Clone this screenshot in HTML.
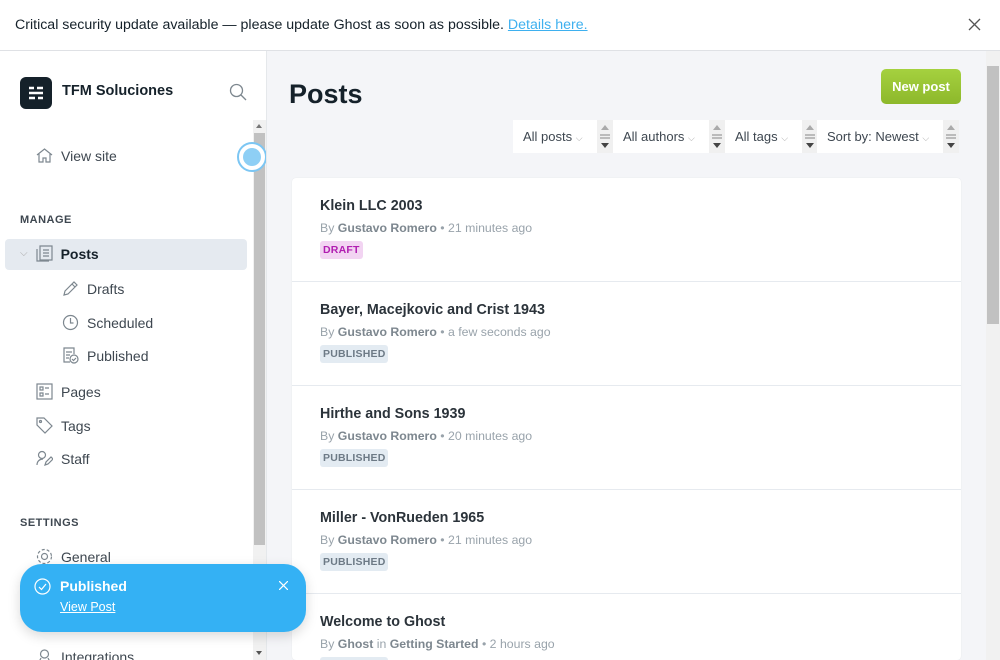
<!DOCTYPE html>
<html style="overflow:hidden;height:660px"><head><meta charset="utf-8"><style>
*{box-sizing:border-box;margin:0;padding:0}
body{width:1000px;height:660px;overflow:hidden;font-family:"Liberation Sans",Roboto,sans-serif;background:#f4f5f8;position:relative;color:#15212a}
.banner{position:absolute;left:0;top:0;width:1000px;height:51px;background:#fff;border-bottom:1px solid #dfe1e5;font-size:14.2px;color:#15212a;padding:17px 0 0 15px}
.banner a{color:#3eb0ef;text-decoration:underline}
.side{position:absolute;left:0;top:51px;width:267px;height:609px;background:#fff;border-right:1px solid #e5e8eb;overflow:hidden}
.logo{position:absolute;left:20px;top:26px;width:32px;height:32px;background:#15212a;border-radius:6px}
.sb{position:absolute;left:253px;top:69px;width:13px;height:540px;background:#f1f1f1}
.sb .th{position:absolute;left:1px;top:13px;width:11px;height:412px;background:#c1c1c1}
.nav{position:absolute;font-size:14px;color:#3e4750;display:flex;align-items:center;gap:8px}
.nav svg{width:17px;height:17px;fill:none;stroke:#7d878f;stroke-width:1.2}
.hd{position:absolute;font-size:11px;font-weight:bold;letter-spacing:.5px;color:#3e4750}
.vs{position:absolute;left:986px;top:51px;width:14px;height:609px;background:#f1f1f1}
.vs .th{position:absolute;left:1px;top:15px;width:12px;height:258px;background:#c1c1c1}
.btn{position:absolute;left:881px;top:69px;width:80px;height:35px;background:linear-gradient(#a5d13f,#8db82b);border-radius:5px;color:#fff;font-size:13px;font-weight:bold;text-align:center;line-height:35px}
.filt{position:absolute;top:120px;height:33px;background:#fff;font-size:13px;color:#3e4750;line-height:33px;padding-left:10px}
.spin{position:absolute;top:120px;width:16px;height:33px;background:#f0f0f0}
.spin:before{content:"";position:absolute;left:4px;top:5px;border:4px solid transparent;border-bottom:5px solid #aaa;border-top:0}
.spin:after{content:"";position:absolute;left:4px;top:23px;border:4px solid transparent;border-top:5px solid #444;border-bottom:0}
.spin i{position:absolute;left:3px;top:14px;width:10px;height:5px;border-top:2px solid #bbb;border-bottom:2px solid #bbb}
.card{position:absolute;left:292px;top:178px;width:669px;height:482px;background:#fff;border-radius:4px;box-shadow:0 0 1px rgba(0,0,0,.1);overflow:hidden}
.row{height:104px;border-bottom:1px solid #e6eaef;padding:20px 28px}
.t{font-size:14.3px;font-weight:bold;color:#2b333a}
.m{font-size:12.3px;color:#99a3ab;margin-top:7px}
.m b{color:#7d878f}
.tag{display:inline-block;margin-top:6px;font-size:10.5px;font-weight:bold;padding:3px 3px;border-radius:3px;letter-spacing:.2px}
.dr{background:#f2d4f2;color:#b11eb1}
.pb{background:#e3ebf2;color:#6d7a86}
.toast{position:absolute;left:20px;top:564px;width:286px;height:68px;background:#34b1f4;border-radius:22px;color:#fff;box-shadow:0 4px 12px rgba(0,0,0,.15)}
</style></head><body>
<div class="banner">Critical security update available — please update Ghost as soon as possible. <a>Details here.</a>
<svg style="position:absolute;left:968px;top:18px" width="13" height="13" viewBox="0 0 13 13"><path d="M1 1L12 12M12 1L1 12" stroke="#555" stroke-width="1.3"/></svg></div>
<div class="side">
<div class="logo"><svg width="32" height="32" viewBox="0 0 32 32"><path d="M9 11h5M17 11h6M9 16h14M9 21h6M18 21h5" stroke="#fff" stroke-width="2.4"/></svg></div>
<div style="position:absolute;left:62px;top:32px;font-size:14.5px;font-weight:bold;color:#15212a">TFM Soluciones</div>
<svg style="position:absolute;left:229px;top:32px" width="18" height="18" viewBox="0 0 18 18" fill="none" stroke="#7d878f" stroke-width="1.3"><circle cx="7.5" cy="7.5" r="6"/><path d="M12 12l5 5"/></svg>
<div class="sb"><div class="th"></div><div style="position:absolute;left:3px;top:4px;border:3.5px solid transparent;border-bottom:4px solid #777;border-top:0"></div><div style="position:absolute;left:3px;top:531px;border:3.5px solid transparent;border-top:4px solid #555;border-bottom:0"></div></div>
<div style="position:absolute;left:237px;top:91px;width:30px;height:30px;border-radius:50%;border:2px solid #7cc6f3;background:#fff"><div style="margin:4px;width:18px;height:18px;border-radius:50%;background:#8ecff5"></div></div>
<div class="nav" style="left:36px;top:96px"><svg viewBox="0 0 17 17"><path d="M1 8L8.5 2 16 8M3 7v8h4v-4h3v4h4V7"/></svg>View site</div>
<div class="hd" style="left:20px;top:163px">MANAGE</div>
<div style="position:absolute;left:5px;top:188px;width:242px;height:31px;background:#e5eaf0;border-radius:4px"></div>
<div class="nav" style="left:20px;top:194px;font-weight:bold;color:#15212a"><span style="color:#aaa;font-size:10px;font-weight:normal">⌵</span><svg viewBox="0 0 17 17"><path d="M4 1h12v14H4zM1 4v12h12M7 5h6M7 8h6M7 11h6"/></svg>Posts</div>
<div class="nav" style="left:62px;top:229px"><svg viewBox="0 0 17 17"><path d="M2 15l1-4L12 2l3 3-9 9zM10 4l3 3"/></svg>Drafts</div>
<div class="nav" style="left:62px;top:263px"><svg viewBox="0 0 17 17"><circle cx="8.5" cy="8.5" r="7"/><path d="M8.5 4v5h3"/></svg>Scheduled</div>
<div class="nav" style="left:62px;top:296px"><svg viewBox="0 0 17 17"><path d="M8 15H2V1h10v6M4 5h6M4 8h4M4 11h3"/><circle cx="12" cy="12" r="4"/><path d="M10 12l1.5 1.5L14 11"/></svg>Published</div>
<div class="nav" style="left:36px;top:332px"><svg viewBox="0 0 17 17"><rect x="1" y="1" width="15" height="15"/><path d="M4 4h3v3H4zM4 10h3v3H4zM9 5h4M9 11h4"/></svg>Pages</div>
<div class="nav" style="left:36px;top:366px"><svg viewBox="0 0 17 17"><path d="M1 1h7l8 8-7 7-8-8z"/><circle cx="4.5" cy="4.5" r="1"/></svg>Tags</div>
<div class="nav" style="left:36px;top:399px"><svg viewBox="0 0 17 17"><circle cx="6" cy="5" r="3.5"/><path d="M1 15c0-4 3-6 6-6M9 15l1-3 5-5 2 2-5 5z"/></svg>Staff</div>
<div class="hd" style="left:20px;top:466px">SETTINGS</div>
<div class="nav" style="left:36px;top:497px"><svg viewBox="0 0 17 17"><circle cx="8.5" cy="8.5" r="3"/><circle cx="8.5" cy="8.5" r="7" stroke-dasharray="3 2"/></svg>General</div>
<div class="nav" style="left:36px;top:597px"><svg viewBox="0 0 17 17"><circle cx="8.5" cy="6" r="4"/><path d="M2 16l3-6M15 16l-3-6"/></svg>Integrations</div>
</div>
<div style="position:absolute;left:289px;top:79px;font-size:27px;font-weight:bold;color:#15212a">Posts</div>
<div class="btn">New post</div>
<div class="filt" style="left:513px;width:84px">All posts <span style="color:#aaa;font-size:9px">⌵</span></div><div class="spin" style="left:597px"><i></i></div>
<div class="filt" style="left:613px;width:96px">All authors <span style="color:#aaa;font-size:9px">⌵</span></div><div class="spin" style="left:709px"><i></i></div>
<div class="filt" style="left:725px;width:77px">All tags <span style="color:#aaa;font-size:9px">⌵</span></div><div class="spin" style="left:802px"><i></i></div>
<div class="filt" style="left:817px;width:126px">Sort by: Newest <span style="color:#aaa;font-size:9px">⌵</span></div><div class="spin" style="left:943px"><i></i></div>
<div class="card">
<div class="row"><div class="t">Klein LLC 2003</div><div class="m">By <b>Gustavo Romero</b> • 21 minutes ago</div><span class="tag dr">DRAFT</span></div>
<div class="row"><div class="t">Bayer, Macejkovic and Crist 1943</div><div class="m">By <b>Gustavo Romero</b> • a few seconds ago</div><span class="tag pb">PUBLISHED</span></div>
<div class="row"><div class="t">Hirthe and Sons 1939</div><div class="m">By <b>Gustavo Romero</b> • 20 minutes ago</div><span class="tag pb">PUBLISHED</span></div>
<div class="row"><div class="t">Miller - VonRueden 1965</div><div class="m">By <b>Gustavo Romero</b> • 21 minutes ago</div><span class="tag pb">PUBLISHED</span></div>
<div class="row"><div class="t">Welcome to Ghost</div><div class="m">By <b>Ghost</b> in <b>Getting Started</b> • 2 hours ago</div><span class="tag pb">PUBLISHED</span></div>
</div>
<div class="vs"><div class="th"></div></div>
<div class="toast">
<svg style="position:absolute;left:14px;top:14px" width="17" height="17" viewBox="0 0 17 17" fill="none" stroke="#fff" stroke-width="1.2"><circle cx="8.5" cy="8.5" r="7.5"/><path d="M5 9l2.5 2.5L12 6"/></svg>
<div style="position:absolute;left:40px;top:14px;font-size:14px;font-weight:bold">Published</div>
<div style="position:absolute;left:40px;top:36px;font-size:12.5px;text-decoration:underline">View Post</div>
<svg style="position:absolute;left:259px;top:17px" width="9" height="9" viewBox="0 0 9 9"><path d="M0 0L9 9M9 0L0 9" stroke="#fff" stroke-width="1.2"/></svg>
</div>
</body></html>
